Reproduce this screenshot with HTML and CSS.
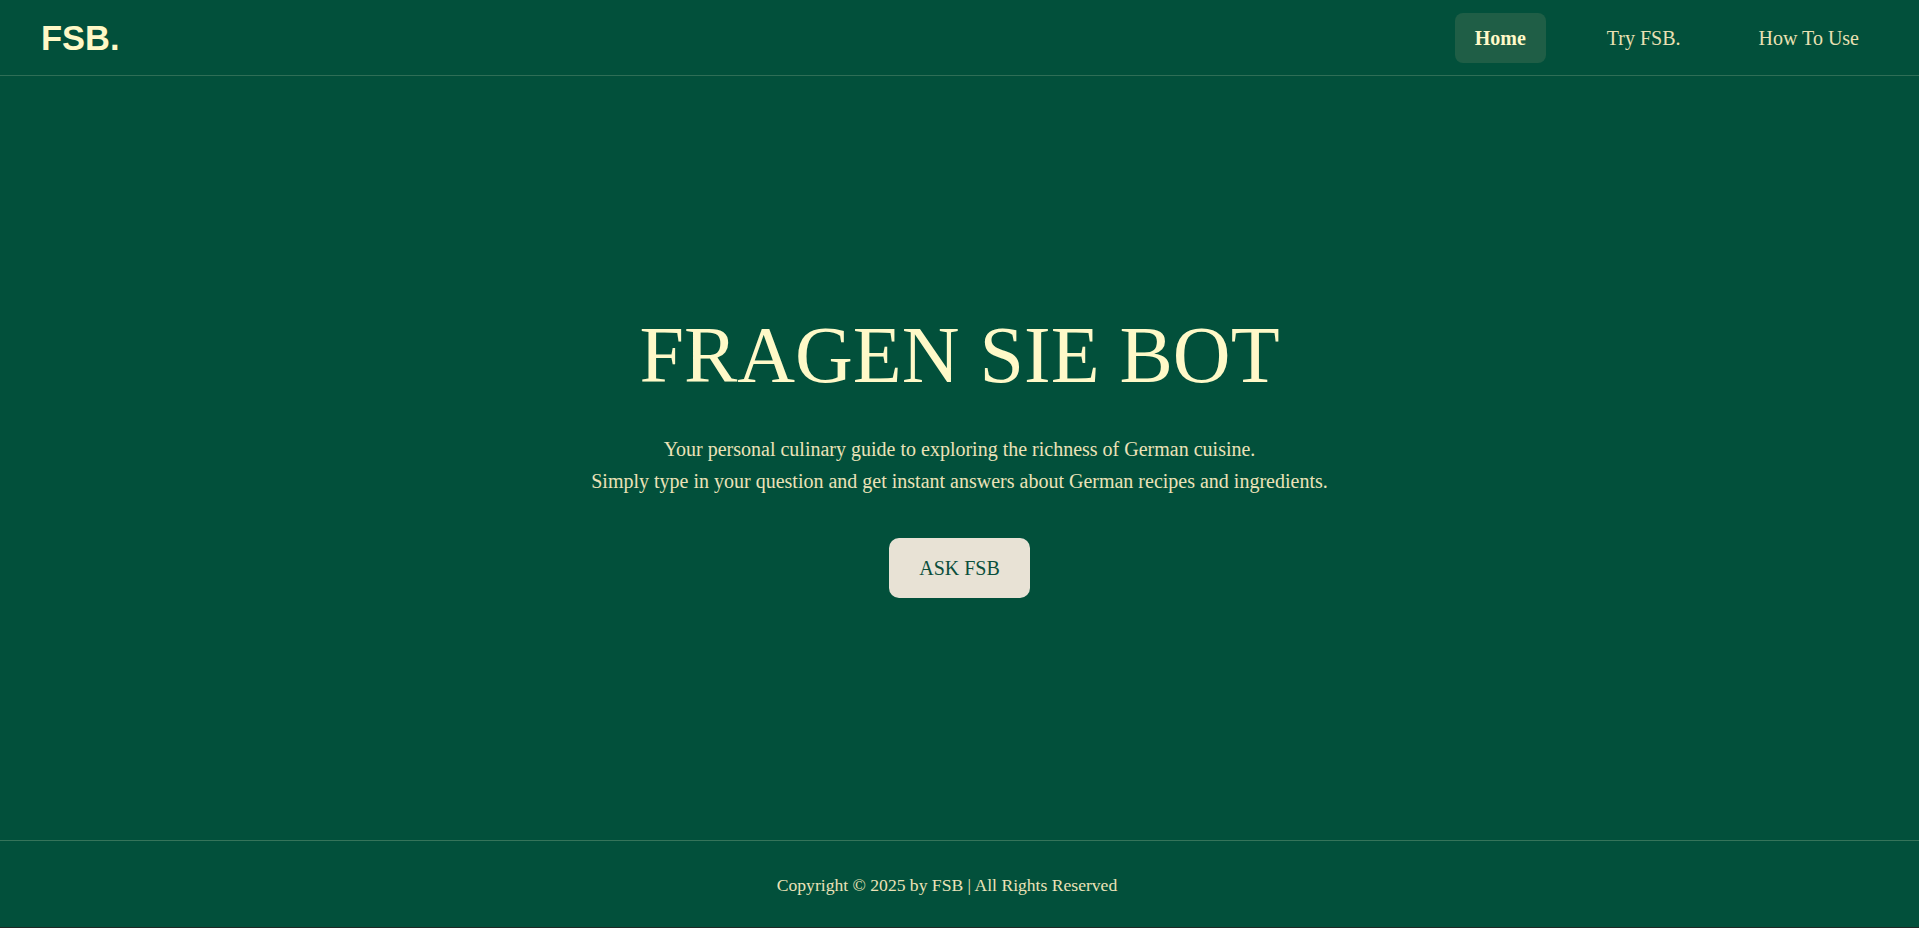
FILE: index.html
```html
<!DOCTYPE html>
<html lang="en">
<head>
<meta charset="utf-8">
<title>FSB. - Fragen Sie Bot</title>
<link rel="stylesheet" href="styles.css">
</head>
<body>
<div class="page">
  <header class="site-header">
    <div class="logo">FSB.</div>
    <nav class="nav">
      <a class="nav-link active" href="#">Home</a>
      <a class="nav-link" href="#">Try FSB.</a>
      <a class="nav-link" href="#">How To Use</a>
    </nav>
  </header>
  <main class="hero">
    <h1 class="hero-title">FRAGEN SIE BOT</h1>
    <p class="hero-text">Your personal culinary guide to exploring the richness of German cuisine.<br>Simply type in your question and get instant answers about German recipes and ingredients.</p>
    <a class="ask-btn" href="#">ASK FSB</a>
  </main>
  <footer class="site-footer">
    <p class="copyright">Copyright © 2025 by FSB | All Rights Reserved</p>
  </footer>
</div>
</body>
</html>
```
FILE: styles.css
```css
* {
  box-sizing: border-box;
}

html, body {
  margin: 0;
  padding: 0;
}

body {
  background: #02503b;
  font-family: "Liberation Serif", "Times New Roman", serif;
  color: #f0e7bb;
}

.page {
  height: 100vh;
  display: flex;
  flex-direction: column;
  border-bottom: 1px solid #1f2a26;
}

.site-header {
  height: 76px;
  display: flex;
  align-items: center;
  justify-content: space-between;
  padding: 0 40px 0 41px;
  border-bottom: 1px solid #2f6e56;
}

.logo {
  font-family: "Liberation Sans", Arial, sans-serif;
  font-weight: 700;
  font-size: 34.5px;
  color: #fff8c6;
  padding-top: 1px;
}

.nav {
  display: flex;
  align-items: center;
  gap: 38px;
  padding-top: 1px;
}

.nav-link {
  display: block;
  padding: 13px 20px;
  font-size: 20px;
  line-height: 24px;
  color: #e9e0b3;
  text-decoration: none;
  border-radius: 8px;
}

.nav-link.active {
  background: #1f5e46;
  color: #fff9c8;
  font-weight: 700;
  margin-right: 3px;
}

.hero {
  flex: 1;
  display: flex;
  flex-direction: column;
  align-items: center;
  justify-content: center;
  padding-bottom: 12px;
  text-align: center;
}

.hero-title {
  margin: 0 0 30px;
  font-size: 80px;
  line-height: 96px;
  font-weight: 400;
  color: #fff9c8;
}

.hero-text {
  margin: 0 0 41px;
  font-size: 20px;
  line-height: 32px;
  color: #ebe2b8;
}

.ask-btn {
  display: inline-block;
  padding: 18px 30px;
  font-size: 20px;
  line-height: 24px;
  background: #e8e2d5;
  color: #0b4f3c;
  text-decoration: none;
  border-radius: 10px;
}

.site-footer {
  height: 87px;
  border-top: 1px solid #35745a;
  display: flex;
  align-items: center;
  justify-content: center;
  padding: 2px 25px 0 0;
}

.copyright {
  margin: 0;
  font-size: 17.6px;
  color: #ebe2b8;
}
```
